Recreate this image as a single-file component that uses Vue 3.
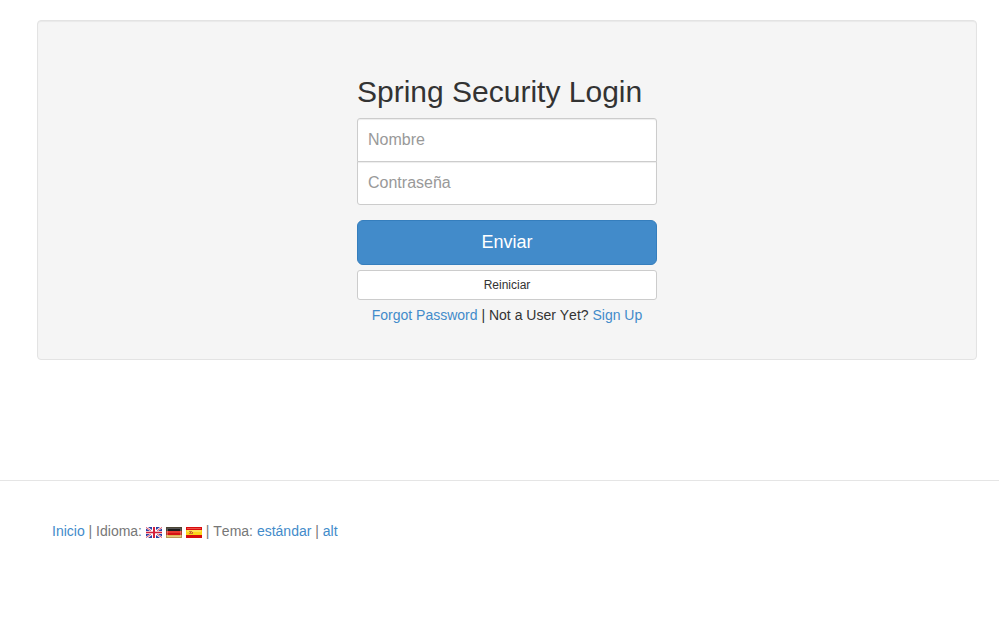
<script setup>
import { ref } from 'vue'

const username = ref('')
const password = ref('')

function reset() {
  username.value = ''
  password.value = ''
}
</script>

<template>
  <div class="page">
    <main class="well">
      <form class="form-signin" @submit.prevent>
        <h2 class="title">Spring Security Login</h2>
        <input v-model="username" class="field field-top" type="text" placeholder="Nombre" />
        <input v-model="password" class="field field-bottom" type="password" placeholder="Contraseña" />
        <button class="btn btn-primary" type="submit">Enviar</button>
        <button class="btn btn-default" type="button" @click="reset">Reiniciar</button>
        <p class="links"><a href="#">Forgot Password</a> | Not a User Yet? <a href="#">Sign Up</a></p>
      </form>
    </main>
    <footer class="footer">
      <p class="footer-text">
        <a href="#">Inicio</a> | Idioma:
        <span class="languages">
          <a href="#"><svg class="flag" viewBox="0 0 16 11">
            <rect width="16" height="11" fill="#fff" />
            <path d="M2 0H6V3zM10 0H14L10 3zM0 1.5L4 4H0zM16 1.5L12 4H16zM0 7H4L0 9.5zM16 7H12L16 9.5zM2 11L6 8V11zM14 11L10 8V11z" fill="#2c3fa5" />
            <path d="M0 .4L5 3.7M16 .4L11 3.7M0 10.6L5 7.3M16 10.6L11 7.3" stroke="#e0556a" />
            <path d="M8 0V11" stroke="#fff" stroke-width="4" />
            <path d="M0 5.5H16" stroke="#fff" stroke-width="3" />
            <path d="M8 0V11" stroke="#d3203c" stroke-width="2" />
            <path d="M0 5.5H16" stroke="#d3203c" stroke-width="1.6" />
          </svg></a>
          <a href="#"><svg class="flag" viewBox="0 0 16 11">
            <rect width="16" height="4" fill="#1c1c1c" />
            <rect y="4" width="16" height="4" fill="#d41212" />
            <rect y="8" width="16" height="3" fill="#e0b552" />
            <rect x="1" y="4" width="14" height="2" fill="#e8382e" />
            <rect x="1.5" y="1.5" width="13" height="8" fill="none" stroke="#fff" stroke-opacity=".25" />
            <rect x=".5" y=".5" width="15" height="10" fill="none" stroke="#8a7a55" stroke-opacity=".45" />
          </svg></a>
          <a href="#"><svg class="flag" viewBox="0 0 16 11">
            <rect width="16" height="11" fill="#d80c0c" />
            <rect x="1" y="1" width="14" height="1" fill="#ee5148" />
            <rect y="3" width="16" height="5" fill="#fbd51b" />
            <rect x="1" y="3" width="14" height="2" fill="#ffe255" />
            <path d="M3 4.5H6M3 6.5H7" stroke="#c97933" />
            <path d="M4 5.5H5M6 5.5H7" stroke="#d44a31" />
          </svg></a>
        </span>
        | Tema: <a href="#">estándar</a> | <a href="#">alt</a>
      </p>
    </footer>
  </div>
</template>

<style>
body {
  margin: 0;
  background: #fff;
}
</style>

<style scoped>
.page {
  padding-top: 20px;
  font-family: "Liberation Sans", Arial, sans-serif;
  font-size: 14px;
  line-height: 20px;
  font-kerning: none;
  color: #333;
}
.page * {
  box-sizing: border-box;
}
.well {
  width: 940px;
  margin-left: 37px;
  padding: 19px;
  background: #f5f5f5;
  border: 1px solid #e3e3e3;
  border-radius: 4px;
  box-shadow: inset 0 1px 1px rgba(0, 0, 0, 0.05);
}
.form-signin {
  display: flex;
  flex-direction: column;
  width: 330px;
  margin: 0 auto;
  padding: 15px;
}
.title {
  margin: 20px 0 10px;
  font-size: 30px;
  font-weight: 500;
  line-height: 33px;
  white-space: nowrap;
}
.field {
  position: relative;
  width: 100%;
  height: 44px;
  padding: 10px;
  font-family: inherit;
  font-size: 16px;
  line-height: 20px;
  color: #555;
  background: #fff;
  border: 1px solid #ccc;
  box-shadow: inset 0 1px 1px rgba(0, 0, 0, 0.075);
  outline: 0;
}
.field::placeholder {
  color: #999;
  opacity: 1;
}
.field-top {
  margin-bottom: -1px;
  border-radius: 3px 3px 0 0;
}
.field-bottom {
  margin-bottom: 15px;
  border-radius: 0 0 3px 3px;
}
.btn {
  width: 100%;
  margin: 0 0 5px;
  font-family: inherit;
  text-align: center;
  cursor: pointer;
}
.btn-primary {
  height: 45px;
  padding: 0 16px;
  font-size: 18px;
  color: #fff;
  background: #428bca;
  border: 1px solid #357ebd;
  border-radius: 6px;
}
.btn-default {
  height: 30px;
  padding: 0 10px;
  font-size: 12px;
  color: #333;
  background: #fff;
  border: 1px solid #ccc;
  border-radius: 3px;
}
.links {
  margin: 0;
  text-align: center;
}
a {
  color: #428bca;
  text-decoration: none;
}
.footer {
  margin-top: 120px;
  padding: 40px 52px;
  border-top: 1px solid #e5e5e5;
  color: #777;
}
.footer-text {
  margin: 0;
}
.languages {
  display: inline-flex;
  gap: 4px;
}
.flag {
  display: inline-block;
  width: 16px;
  height: 11px;
  vertical-align: -2px;
}
</style>
